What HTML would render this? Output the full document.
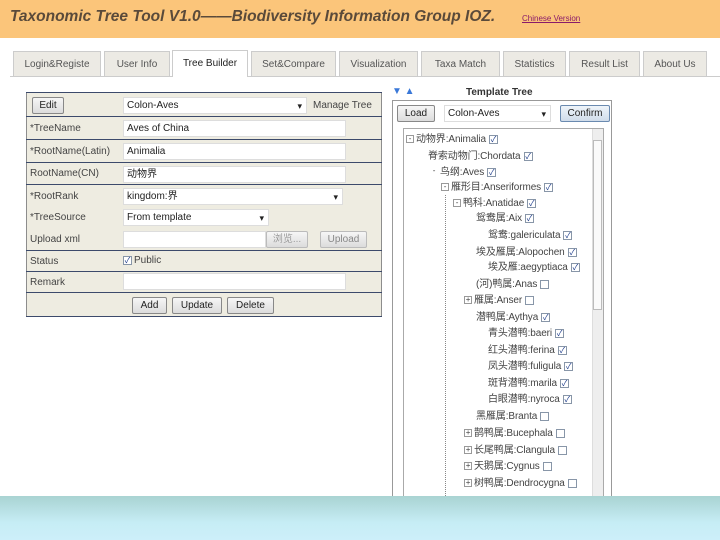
<!DOCTYPE html>
<html><head><meta charset="utf-8"><style>
*{box-sizing:border-box;margin:0;padding:0}
body{width:720px;height:540px;overflow:hidden;background:#fff;position:relative;font-family:"Liberation Sans","Noto Sans CJK SC",sans-serif;font-size:10px;color:#333}
.a{position:absolute}
#hdr{left:0;top:0;width:720px;height:38px;background:#fbc57a}
#hdr .t{left:10px;top:8px;font-size:15.5px;font-weight:bold;font-style:italic;color:#5a4a3a;white-space:nowrap}
#hdr .c{left:522px;top:14px;font-size:8px;color:#8a1a6a;text-decoration:underline}
.tab{top:51px;height:25px;border:1px solid #ccc;border-bottom:none;background:#eceae4;font-size:10px;color:#555;text-align:center;line-height:25px}
.tab.on{background:#fff;top:50px;height:27px;color:#222}
#form{left:26px;top:92px;width:356px;height:225px;background:#eeece1;border:1px solid #8d8d8d}
.hl{left:26px;width:356px;height:1px;background:#3c4a6b}
.lb{left:30px;font-size:10px;color:#444}
.in{background:#fff;border:1px solid #ddd;height:17px;font-size:10px;padding-left:3px;line-height:16px;color:#222}
.btn{background:linear-gradient(#f6f6f6,#dcdcdc);border:1px solid #888;border-radius:2px;font-size:10px;text-align:center;line-height:15px;color:#222;height:17px}
.sel::after{content:"▾";position:absolute;right:4px;top:0;font-size:9px}
.cb{display:inline-block;width:9px;height:9px;border:1px solid #8896a8;background:#fff;font-size:8px;line-height:7px;text-align:center;color:#1a3a8a;vertical-align:middle;margin-left:3px}
.tr{font-size:10px;color:#444;white-space:nowrap;line-height:14px;letter-spacing:-0.1px}
.ex{display:inline-block;width:8px;height:8px;border:1px solid #999;font-size:8px;line-height:6px;text-align:center;margin-right:2px;vertical-align:middle;background:#fff}
#bot{left:0;top:496px;width:720px;height:44px;background:linear-gradient(#a9d3d2,#c6edf5 60%,#cdeffa)}
</style></head><body>
<div id="hdr" class="a"><div class="a t">Taxonomic Tree Tool V1.0——Biodiversity Information Group IOZ.</div><div class="a c">Chinese Version</div></div>
<div class="a" style="left:10px;top:76px;width:710px;height:1px;background:#ccc"></div>
<div class="a tab" style="left:13px;width:88px">Login&amp;Registe</div>
<div class="a tab" style="left:104px;width:66px">User Info</div>
<div class="a tab on" style="left:172px;width:76px">Tree Builder</div>
<div class="a tab" style="left:251px;width:85px">Set&amp;Compare</div>
<div class="a tab" style="left:339px;width:79px">Visualization</div>
<div class="a tab" style="left:421px;width:79px">Taxa Match</div>
<div class="a tab" style="left:503px;width:63px">Statistics</div>
<div class="a tab" style="left:569px;width:71px">Result List</div>
<div class="a tab" style="left:643px;width:64px">About Us</div>

<div id="form" class="a"></div>
<div class="a hl" style="top:92px"></div>
<div class="a hl" style="top:116px"></div>
<div class="a hl" style="top:139px"></div>
<div class="a hl" style="top:162px"></div>
<div class="a hl" style="top:184px"></div>
<div class="a hl" style="top:250px"></div>
<div class="a hl" style="top:271px"></div>
<div class="a hl" style="top:292px"></div>
<div class="a hl" style="top:316px"></div>

<div class="a btn" style="left:32px;top:97px;width:32px">Edit</div>
<div class="a in sel" style="left:123px;top:97px;width:184px">Colon-Aves</div>
<div class="a lb" style="left:313px;top:100px">Manage Tree</div>
<div class="a lb" style="top:123px">*TreeName</div><div class="a in" style="left:123px;top:120px;width:223px">Aves of China</div>
<div class="a lb" style="top:146px">*RootName(Latin)</div><div class="a in" style="left:123px;top:143px;width:223px">Animalia</div>
<div class="a lb" style="top:168px">RootName(CN)</div><div class="a in" style="left:123px;top:166px;width:223px">动物界</div>
<div class="a lb" style="top:191px">*RootRank</div><div class="a in sel" style="left:123px;top:188px;width:220px">kingdom:界</div>
<div class="a lb" style="top:212px">*TreeSource</div><div class="a in sel" style="left:123px;top:209px;width:146px">From template</div>
<div class="a lb" style="top:234px">Upload xml</div><div class="a in" style="left:123px;top:231px;width:143px"></div>
<div class="a btn" style="left:266px;top:231px;width:42px;color:#999;border-color:#bbb">浏览...</div>
<div class="a btn" style="left:320px;top:231px;width:47px;color:#888;border-color:#bbb">Upload</div>
<div class="a lb" style="top:256px">Status</div><div class="a lb" style="left:123px;top:255px"><span class="cb" style="margin:0 2px 0 0">✓</span>Public</div>
<div class="a lb" style="top:277px">Remark</div><div class="a in" style="left:123px;top:273px;width:223px"></div>
<div class="a btn" style="left:132px;top:297px;width:35px">Add</div>
<div class="a btn" style="left:172px;top:297px;width:50px">Update</div>
<div class="a btn" style="left:227px;top:297px;width:47px">Delete</div>

<div class="a" style="left:392px;top:86px;color:#3a78d8;font-size:10px">▼ ▲</div>
<div class="a" style="left:466px;top:87px;font-weight:bold;font-size:10px;color:#333">Template Tree</div>
<div class="a" style="left:392px;top:100px;width:220px;height:396px;border:1px solid #999;border-bottom:none"></div>
<div class="a btn" style="left:397px;top:105px;width:38px">Load</div>
<div class="a in sel" style="left:444px;top:105px;width:107px">Colon-Aves</div>
<div class="a btn" style="left:560px;top:105px;width:50px;border-color:#6a8ab0;background:linear-gradient(#eef4fa,#d0dcea)">Confirm</div>
<div class="a" style="left:403px;top:128px;width:201px;height:368px;border:1px solid #aaa;border-bottom:none"></div>
<div class="a" style="left:592px;top:129px;width:11px;height:367px;background:#eee;border-left:1px solid #ddd"></div>
<div class="a" style="left:593px;top:140px;width:9px;height:170px;background:#fafafa;border:1px solid #bbb"></div>
<div class="a" style="left:445px;top:195px;width:0;height:301px;border-left:1px dotted #888"></div>

<div class="a tr" style="left:406px;top:133px"><span class="ex">-</span>动物界:Animalia<span class="cb">✓</span></div>
<div class="a tr" style="left:418px;top:150px"><span class="ex" style="border:none"> </span>脊索动物门:Chordata<span class="cb">✓</span></div>
<div class="a tr" style="left:430px;top:166px"><span class="ex" style="border:none">-</span>鸟纲:Aves<span class="cb">✓</span></div>
<div class="a tr" style="left:441px;top:181px"><span class="ex">-</span>雁形目:Anseriformes<span class="cb">✓</span></div>
<div class="a tr" style="left:453px;top:197px"><span class="ex">-</span>鸭科:Anatidae<span class="cb">✓</span></div>
<div class="a tr" style="left:466px;top:212px"><span class="ex" style="border:none"> </span>鸳鸯属:Aix<span class="cb">✓</span></div>
<div class="a tr" style="left:478px;top:229px"><span class="ex" style="border:none"> </span>鸳鸯:galericulata<span class="cb">✓</span></div>
<div class="a tr" style="left:466px;top:246px"><span class="ex" style="border:none"> </span>埃及雁属:Alopochen<span class="cb">✓</span></div>
<div class="a tr" style="left:478px;top:261px"><span class="ex" style="border:none"> </span>埃及雁:aegyptiaca<span class="cb">✓</span></div>
<div class="a tr" style="left:466px;top:278px"><span class="ex" style="border:none"> </span>(河)鸭属:Anas<span class="cb"></span></div>
<div class="a tr" style="left:464px;top:294px"><span class="ex">+</span>雁属:Anser<span class="cb"></span></div>
<div class="a tr" style="left:466px;top:311px"><span class="ex" style="border:none"> </span>潜鸭属:Aythya<span class="cb">✓</span></div>
<div class="a tr" style="left:478px;top:327px"><span class="ex" style="border:none"> </span>青头潜鸭:baeri<span class="cb">✓</span></div>
<div class="a tr" style="left:478px;top:344px"><span class="ex" style="border:none"> </span>红头潜鸭:ferina<span class="cb">✓</span></div>
<div class="a tr" style="left:478px;top:360px"><span class="ex" style="border:none"> </span>凤头潜鸭:fuligula<span class="cb">✓</span></div>
<div class="a tr" style="left:478px;top:377px"><span class="ex" style="border:none"> </span>斑背潜鸭:marila<span class="cb">✓</span></div>
<div class="a tr" style="left:478px;top:393px"><span class="ex" style="border:none"> </span>白眼潜鸭:nyroca<span class="cb">✓</span></div>
<div class="a tr" style="left:466px;top:410px"><span class="ex" style="border:none"> </span>黑雁属:Branta<span class="cb"></span></div>
<div class="a tr" style="left:464px;top:427px"><span class="ex">+</span>鹊鸭属:Bucephala<span class="cb"></span></div>
<div class="a tr" style="left:464px;top:444px"><span class="ex">+</span>长尾鸭属:Clangula<span class="cb"></span></div>
<div class="a tr" style="left:464px;top:460px"><span class="ex">+</span>天鹅属:Cygnus<span class="cb"></span></div>
<div class="a tr" style="left:464px;top:477px"><span class="ex">+</span>树鸭属:Dendrocygna<span class="cb"></span></div>

<div id="bot" class="a"></div>
</body></html>
